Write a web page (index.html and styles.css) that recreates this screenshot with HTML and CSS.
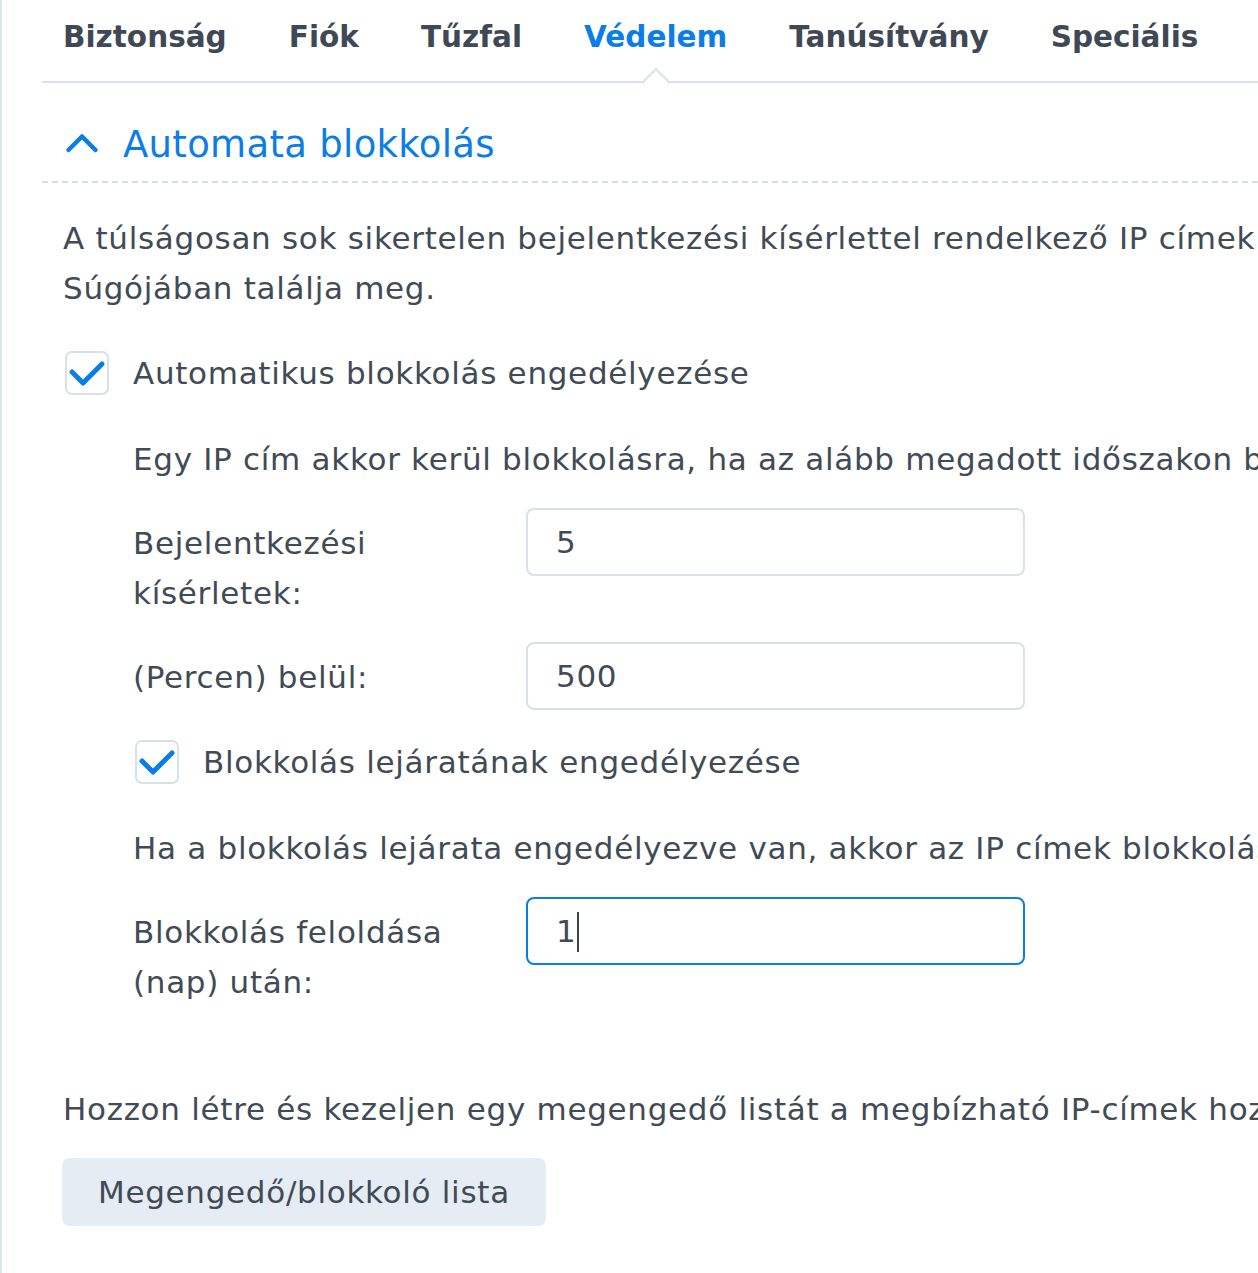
FILE: index.html
```html
<!DOCTYPE html>
<html lang="hu">
<head>
    <meta charset="UTF-8">
    <meta name="viewport" content="width=device-width, initial-scale=1.0">
    <title>Biztonság - Védelem</title>
    <link rel="stylesheet" href="styles.css">
</head>
<body>
    <div class="page">
        <nav class="tabs">
            <div class="tab">Biztonság</div>
            <div class="tab">Fiók</div>
            <div class="tab">Tűzfal</div>
            <div class="tab active">Védelem</div>
            <div class="tab">Tanúsítvány</div>
            <div class="tab">Speciális</div>
        </nav>

        <div class="section-head">
            <svg class="chevron" width="40" height="40" viewBox="0 0 40 40">
                <polyline points="5.5,25 19,11.5 32.5,25" fill="none" stroke="#0b7de6" stroke-width="4.5" stroke-linecap="round" stroke-linejoin="round"/>
            </svg>
            <span class="section-title">Automata blokkolás</span>
        </div>

        <div class="section-body">
            <p class="desc">A túlságosan sok sikertelen bejelentkezési kísérlettel rendelkező IP címek automatikusan blokkolásra kerülnek. További információt a</p>
            <p class="desc">Súgójában találja meg.</p>

            <label class="check-row">
                <span class="checkbox">
                    <svg width="44" height="44" viewBox="0 0 44 44"><polyline points="7,21 18,32 37,13" fill="none" stroke="#0b7de6" stroke-width="5" stroke-linecap="round" stroke-linejoin="round"/></svg>
                </span>
                <span>Automatikus blokkolás engedélyezése</span>
            </label>

            <div class="sub">
                <p class="note">Egy IP cím akkor kerül blokkolásra, ha az alább megadott időszakon belül elérte a sikertelen bejelentkezési kísérletek számát.</p>

                <div class="form-row">
                    <div class="form-label">Bejelentkezési<br>kísérletek:</div>
                    <div class="field">5</div>
                </div>
                <div class="form-row">
                    <div class="form-label">(Percen) belül:</div>
                    <div class="field">500</div>
                </div>

                <label class="check-row small">
                    <span class="checkbox">
                        <svg width="44" height="44" viewBox="0 0 44 44"><polyline points="7,21 18,32 37,13" fill="none" stroke="#0b7de6" stroke-width="5" stroke-linecap="round" stroke-linejoin="round"/></svg>
                    </span>
                    <span>Blokkolás lejáratának engedélyezése</span>
                </label>

                <p class="note">Ha a blokkolás lejárata engedélyezve van, akkor az IP címek blokkolása a megadott napok után feloldódik.</p>

                <div class="form-row">
                    <div class="form-label">Blokkolás feloldása<br>(nap) után:</div>
                    <div class="field focused">1<span class="caret"></span></div>
                </div>
            </div>

            <p class="desc list-note">Hozzon létre és kezeljen egy megengedő listát a megbízható IP-címek hozzáadásához, illetve egy blokkoló listát.</p>
            <button class="btn">Megengedő/blokkoló lista</button>
        </div>
    </div>
</body>
</html>
```

FILE: styles.css
```css
body {
    margin: 0;
    padding: 0;
    font-family: 'DejaVu Sans', Verdana, sans-serif;
    color: #414b56;
    background: #fff;
    overflow: hidden;
}

.page {
    border-left: 2px solid #dde5ed;
    padding-left: 40px;
    min-height: 1273px;
    box-sizing: border-box;
    overflow: hidden;
}

/* tabs */
.tabs {
    display: flex;
    gap: 62px;
    padding-left: 21px;
    border-bottom: 2px solid #d9e2eb;
    white-space: nowrap;
}

.tab {
    position: relative;
    font-size: 29.5px;
    font-weight: bold;
    line-height: 75px;
    padding-bottom: 6px;
    color: #3f4955;
}

.tab.active {
    color: #0b7de6;
}

.tab.active::after {
    content: '';
    position: absolute;
    left: 50%;
    bottom: -12px;
    width: 21px;
    height: 21px;
    box-sizing: border-box;
    background: #fff;
    border-top: 2px solid #d9e2eb;
    border-left: 2px solid #d9e2eb;
    transform: translateX(-50%) rotate(45deg);
}

/* section header */
.section-head {
    display: flex;
    align-items: center;
    gap: 20px;
    padding: 37px 0 13px 21px;
    background-image: linear-gradient(to right, #d5dfe9 6px, transparent 6px);
    background-size: 10px 2px;
    background-repeat: repeat-x;
    background-position: left bottom;
}

.chevron {
    display: block;
}

.section-title {
    font-size: 37px;
    line-height: 50px;
    letter-spacing: 0.3px;
    color: #0b7de6;
    white-space: nowrap;
}

.section-body {
    padding: 30px 0 0 21px;
    font-size: 31px;
    line-height: 50px;
    letter-spacing: 0.7px;
}

.desc,
.note {
    margin: 0;
    white-space: nowrap;
}

.check-row {
    display: flex;
    align-items: center;
    gap: 24px;
    height: 50px;
    margin-top: 35px;
    padding-left: 2px;
    white-space: nowrap;
}

.check-row.small {
    margin-top: 27px;
}

.checkbox {
    width: 44px;
    height: 44px;
    box-sizing: border-box;
    border: 2px solid #d8e1ea;
    border-radius: 7px;
    position: relative;
    flex: none;
}

.checkbox svg {
    position: absolute;
    left: -2px;
    top: -2px;
}

.sub {
    padding-left: 70px;
}

.sub .note {
    margin-top: 36px;
}

.form-row {
    display: flex;
    align-items: flex-start;
    margin-top: 24px;
}

.form-label {
    width: 393px;
    margin-top: 10px;
    flex: none;
}

.field {
    width: 499px;
    height: 68px;
    box-sizing: border-box;
    border: 2px solid #d8e1ea;
    border-radius: 8px;
    padding-left: 28px;
    line-height: 64px;
    flex: none;
}

.field.focused {
    border-color: #0b7de6;
}

.caret {
    display: inline-block;
    width: 2px;
    height: 40px;
    background: #3a434d;
    vertical-align: middle;
    margin-left: 1px;
    position: relative;
    top: -2px;
}

.list-note {
    margin-top: 77px;
}

.btn {
    display: block;
    margin-top: 24px;
    margin-left: -1px;
    height: 68px;
    padding: 0 36px;
    border: none;
    border-radius: 8px;
    background: #e6ecf4;
    color: #414b56;
    font-family: 'DejaVu Sans', Verdana, sans-serif;
    font-size: 31px;
    letter-spacing: 0.7px;
    cursor: pointer;
}
```
